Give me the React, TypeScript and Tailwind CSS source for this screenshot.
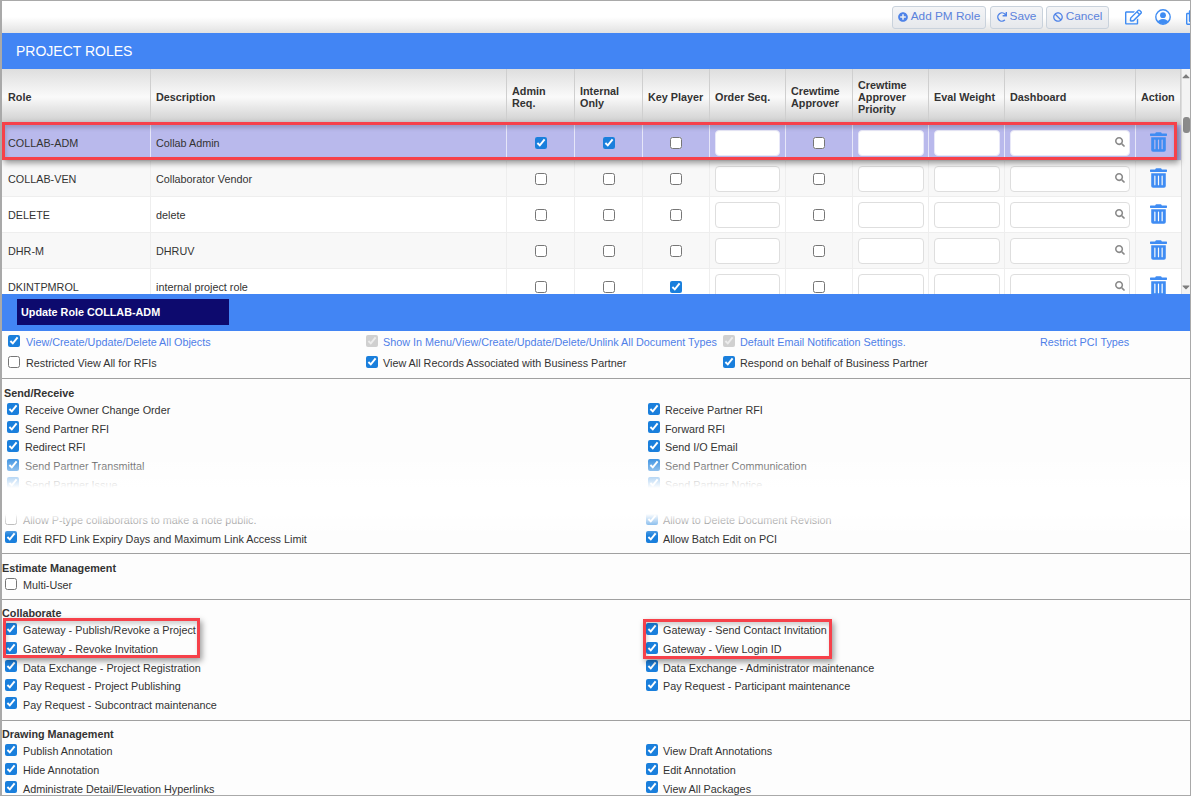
import React from "react";
import { FaPlusCircle, FaRedo, FaBan, FaRegEdit, FaRegClone, FaTrashAlt, FaSearch, FaCaretUp, FaCaretDown } from "react-icons/fa";

const cols = "grid grid-cols-[149px_356px_68px_68px_67px_76px_67px_76px_76px_131px_45px]";

function Cb({ on = false, dis = false, lift = false }: { on?: boolean; dis?: boolean; lift?: boolean }) {
  return (
    <input
      type="checkbox"
      checked={on}
      disabled={dis}
      readOnly
      className={`m-0 w-[12px] h-[12px] shrink-0 accent-[#1a7fdc] ${lift ? "-mt-[3px]" : ""}`}
    />
  );
}

function Cell({ children, last = false, sel = false }: { children?: React.ReactNode; last?: boolean; sel?: boolean }) {
  return (
    <div className={`flex items-center justify-center min-w-0 ${last ? "" : sel ? "border-r border-r-[#e6e6f8]" : "border-r border-r-[#eeeeee]"}`}>
      {children}
    </div>
  );
}

function Field({ search = false, selected = false, wide = false }: { search?: boolean; selected?: boolean; wide?: boolean }) {
  return (
    <div className={`relative ml-[5px] ${wide ? "mr-[4px]" : "mr-[5px]"} w-full h-[26px] rounded-[4px] bg-white border ${selected ? "border-[#e8e8f8]" : "border-[#dedede]"}`}>
      {search && <FaSearch className="absolute right-[4px] top-[6px] text-[#8a8a8a] w-[10px] h-[10px]" />}
    </div>
  );
}

type Role = { r: string; d: string; a?: boolean; i?: boolean; k?: boolean; sel?: boolean; alt?: boolean };
const roles: Role[] = [
  { r: "COLLAB-ADM", d: "Collab Admin", a: true, i: true, sel: true },
  { r: "COLLAB-VEN", d: "Collaborator Vendor" },
  { r: "DELETE", d: "delete", alt: true },
  { r: "DHR-M", d: "DHRUV" },
  { r: "DKINTPMROL", d: "internal project role", k: true, alt: true },
];

function RoleRow({ x }: { x: Role }) {
  const bg = x.sel ? "bg-[#b9b9ec]" : x.alt ? "bg-white" : "bg-[#f8f8f8]";
  const line = x.sel ? "border-r-[#e6e6f8]" : "border-r-[#eeeeee]";
  return (
    <div className={`${cols} h-[36px] ${bg} border-b border-b-[#eeeeee] text-[#333]`}>
      <div className={`flex items-center pl-[6px] pt-[1px] border-r ${line}`}>{x.r}</div>
      <div className={`flex items-center pl-[5px] pt-[1px] border-r ${line}`}>{x.d}</div>
      <Cell sel={x.sel}><Cb on={x.a} /></Cell>
      <Cell sel={x.sel}><Cb on={x.i} /></Cell>
      <Cell sel={x.sel}><Cb on={x.k} /></Cell>
      <Cell sel={x.sel}><Field selected={x.sel} /></Cell>
      <Cell sel={x.sel}><Cb /></Cell>
      <Cell sel={x.sel}><Field wide selected={x.sel} /></Cell>
      <Cell sel={x.sel}><Field wide selected={x.sel} /></Cell>
      <Cell sel={x.sel}><Field search selected={x.sel} /></Cell>
      <Cell last><FaTrashAlt className="text-[#3f8cf3] w-[17px] h-[20px] -mt-[2px]" /></Cell>
    </div>
  );
}

function Head({ children, first = false }: { children: React.ReactNode; first?: boolean }) {
  return (
    <div className={`flex items-center font-bold leading-[12px] text-[#333] border-r border-r-[#cfcfcf] ${first ? "pl-[6px]" : "pl-[5px]"}`}>
      <span>{children}</span>
    </div>
  );
}

function Perm({ label, on = true, right = false }: { label: string; on?: boolean; right?: boolean }) {
  return (
    <div className={`flex items-center min-w-0 whitespace-nowrap ${right ? "gap-[5px]" : "gap-[6px]"}`}>
      <Cb on={on} lift />
      <span className="text-[#333]">{label}</span>
    </div>
  );
}

function PermRows({ rows, shift = false }: { rows: [string, string?, boolean?][]; shift?: boolean }) {
  return (
    <div className={shift ? "pl-[5px]" : "pl-[3px]"}>
      {rows.map(([a, b, off], i) => (
        <div key={i} className="grid grid-cols-[641px_1fr] h-[18.6px] items-center">
          <Perm label={a} on={!off} />
          {b ? <Perm right label={b} /> : <div />}
        </div>
      ))}
    </div>
  );
}

function Title({ children, inset = false }: { children: React.ReactNode; inset?: boolean }) {
  return <div className={`h-[15px] leading-[15px] font-bold text-[#333] ${inset ? "pl-[2px]" : ""}`}>{children}</div>;
}

function Rule() {
  return <div className="h-px bg-[#a0a0a0]" />;
}

function ToolBtn({ icon, label, w }: { icon: React.ReactNode; label: string; w: string }) {
  return (
    <button className={`${w} h-[23px] flex items-center justify-center gap-[3px] whitespace-nowrap rounded-[3px] border border-[#c9d2dc] bg-gradient-to-b from-[#f4f5f7] to-[#e6e8ec] text-[#5b82dc] text-[11.8px] leading-none`}>
      {icon}
      {label}
    </button>
  );
}

function RedBox({ className }: { className: string }) {
  return <div className={`absolute border-[3px] border-[#f6414a] shadow-[2px_3px_6px_rgba(0,0,0,0.4),inset_1px_3px_4px_rgba(0,0,0,0.18)] pointer-events-none ${className}`} />;
}

function UserIcon() {
  return (
    <svg viewBox="0 0 16 16" className="w-[16px] h-[16px] shrink-0">
      <defs>
        <clipPath id="userRing"><circle cx="8" cy="8" r="7" /></clipPath>
      </defs>
      <circle cx="8" cy="6.2" r="2.9" fill="currentColor" />
      <ellipse cx="8" cy="14.2" rx="5.4" ry="4.2" fill="currentColor" clipPath="url(#userRing)" />
      <circle cx="8" cy="8" r="7.2" fill="none" stroke="currentColor" strokeWidth="1.4" />
    </svg>
  );
}

export default function App() {
  return (
    <div
      className="relative w-[1191px] h-[796px] overflow-hidden bg-[#fdfdfd] text-[10.8px] border-t border-t-[#a9a9a9] border-l-2 border-l-[#a9a9a9] border-b border-b-[#a9a9a9] border-r border-r-[#a9a9a9]"
      style={{ fontFamily: '"Liberation Sans", Arial, sans-serif' }}
    >
      {/* toolbar */}
      <div className="h-[32px] bg-gradient-to-b from-white via-white to-[#e2e2e2] flex items-center pl-[890px] overflow-hidden">
        <div className="flex items-center shrink-0">
          <ToolBtn w="w-[94px] mr-[4px]" icon={<FaPlusCircle className="w-[10px] h-[10px] text-[#4f83e8]" />} label="Add PM Role" />
          <ToolBtn w="w-[53px] mr-[3px]" icon={<FaRedo className="w-[10px] h-[10px] text-[#4f83e8]" />} label="Save" />
          <ToolBtn w="w-[63px]" icon={<FaBan className="w-[10px] h-[10px] text-[#4f83e8]" />} label="Cancel" />
          <div className="ml-[16px] flex items-center text-[#3f8cf3] shrink-0">
            <FaRegEdit className="w-[17px] h-[16px] mr-[13px]" />
            <UserIcon />
            <FaRegClone className="w-[15px] h-[15px] ml-[15px]" />
          </div>
        </div>
      </div>
      {/* blue title */}
      <div className="h-[36px] bg-[#4285f4] flex items-center pl-[14px] text-white text-[14px]">PROJECT ROLES</div>

      {/* table */}
      <div className="relative h-[225px] overflow-hidden">
        <div className={`${cols} h-[56px] bg-gradient-to-b from-[#dedede] via-[#fafafa] to-[#cbcbcb]`}>
          <Head first>Role</Head>
          <Head>Description</Head>
          <Head>Admin<br />Req.</Head>
          <Head>Internal<br />Only</Head>
          <Head>Key Player</Head>
          <Head>Order Seq.</Head>
          <Head>Crewtime<br />Approver</Head>
          <Head>Crewtime<br />Approver<br />Priority</Head>
          <Head>Eval Weight</Head>
          <Head>Dashboard</Head>
          <Head>Action</Head>
        </div>
        {roles.map((x) => <RoleRow key={x.r} x={x} />)}
        {/* scrollbar */}
        <div className="absolute right-0 top-0 bottom-0 w-[9px] bg-[#f3f3f3] border-l border-l-[#dcdcdc]">
          <FaCaretUp className="absolute left-[-1px] top-[1px] w-[10px] h-[12px] text-[#7d7d7d]" />
          <div className="absolute left-[1px] top-[48px] w-[7px] h-[16px] rounded-[3px] bg-[#8a8a8a]" />
          <FaCaretDown className="absolute left-[-1px] bottom-[1px] w-[10px] h-[12px] text-[#7d7d7d]" />
        </div>
      </div>

      {/* update band */}
      <div className="h-[37px] bg-[#4285f4] pl-[15px] pt-[5px]">
        <div className="w-[212px] h-[26px] bg-[#0d0a6e] flex items-center pl-[4px] text-white font-bold">Update Role COLLAB-ADM</div>
      </div>

      {/* top permissions */}
      <div className="h-[47px] pl-[6px] grid grid-cols-[358px_357px_317px_1fr] grid-rows-[22px_20px] items-center whitespace-nowrap">
        <div className="flex items-center gap-[6px]"><Cb on lift /><span className="text-[#4f7fe8]">View/Create/Update/Delete All Objects</span></div>
        <div className="flex items-center gap-[5px]"><Cb on dis lift /><span className="text-[#4f7fe8]">Show In Menu/View/Create/Update/Delete/Unlink All Document Types</span></div>
        <div className="flex items-center gap-[5px]"><Cb on dis lift /><span className="text-[#4f7fe8]">Default Email Notification Settings.</span></div>
        <div className="text-[#4f7fe8]">Restrict PCI Types</div>
        <div className="flex items-center gap-[6px]"><Cb lift /><span className="text-[#333]">Restricted View All for RFIs</span></div>
        <div className="flex items-center gap-[5px]"><Cb on lift /><span className="text-[#333]">View All Records Associated with Business Partner</span></div>
        <div className="flex items-center gap-[5px]"><Cb on lift /><span className="text-[#333]">Respond on behalf of Business Partner</span></div>
      </div>
      <Rule />

      <div className="pt-[7px]">
        <Title inset>Send/Receive</Title>
        <PermRows shift rows={[
          ["Receive Owner Change Order", "Receive Partner RFI"],
          ["Send Partner RFI", "Forward RFI"],
          ["Redirect RFI", "Send I/O Email"],
          ["Send Partner Transmittal", "Send Partner Communication"],
          ["Send Partner Issue", "Send Partner Notice"],
        ]} />
        <div className="h-[17px]" />
        <PermRows rows={[
          ["Allow P-type collaborators to make a note public.", "Allow to Delete Document Revision", true],
          ["Edit RFD Link Expiry Days and Maximum Link Access Limit", "Allow Batch Edit on PCI"],
        ]} />
      </div>
      <div className="h-[5px]" />
      <Rule />

      <div className="pt-[7px] h-[45px]">
        <Title>Estimate Management</Title>
        <div className="pl-[3px] h-[18.6px] flex items-center">
          <Perm label="Multi-User" on={false} />
        </div>
      </div>
      <Rule />

      <div className="pt-[6px] h-[120px]">
        <Title>Collaborate</Title>
        <PermRows rows={[
          ["Gateway - Publish/Revoke a Project", "Gateway - Send Contact Invitation"],
          ["Gateway - Revoke Invitation", "Gateway - View Login ID"],
          ["Data Exchange - Project Registration", "Data Exchange - Administrator maintenance"],
          ["Pay Request - Project Publishing", "Pay Request - Participant maintenance"],
          ["Pay Request - Subcontract maintenance"],
        ]} />
      </div>
      <Rule />

      <div className="pt-[6px]">
        <Title>Drawing Management</Title>
        <PermRows rows={[
          ["Publish Annotation", "View Draft Annotations"],
          ["Hide Annotation", "Edit Annotation"],
          ["Administrate Detail/Elevation Hyperlinks", "View All Packages"],
        ]} />
      </div>

      {/* torn-edge fade over the permissions list */}
      <div className="absolute left-0 right-0 top-[452px] h-[35px] bg-gradient-to-b from-transparent to-white pointer-events-none" />
      <div className="absolute left-0 right-0 top-[487px] h-[26px] bg-white pointer-events-none" />
      <div className="absolute left-0 right-0 top-[513px] h-[22px] bg-gradient-to-b from-white to-transparent pointer-events-none" />

      {/* red call-outs */}
      <RedBox className="left-0 top-[121px] w-[1175px] h-[38px]" />
      <RedBox className="left-[1px] top-[617px] w-[197px] h-[40px]" />
      <RedBox className="left-[641px] top-[618px] w-[189px] h-[40px]" />
    </div>
  );
}
